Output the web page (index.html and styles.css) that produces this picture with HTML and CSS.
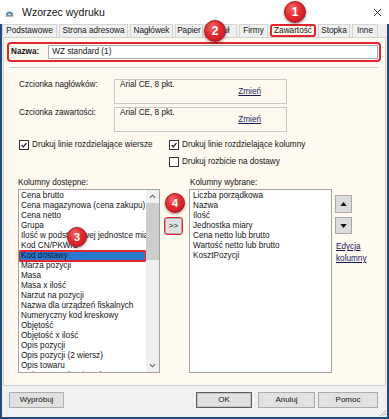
FILE: index.html
```html
<!DOCTYPE html>
<html lang="pl">
<head>
  <meta charset="UTF-8" />
  <title>Wzorzec wydruku</title>
  <link rel="stylesheet" href="styles.css">
</head>
<body>
  <div class="window">
    <div class="titlebar">
      <svg class="app-icon" viewBox="0 0 10 10">
        <path d="M1 8 A4 4 0 0 1 9 8 Z" fill="#5b86b4"/>
        <path d="M3 8 A2 2 0 0 1 7 8 Z" fill="#d9e6f2"/>
        <rect x="1" y="8" width="8" height="1.5" fill="#7a7a7a"/>
      </svg>
      <span class="title">Wzorzec wydruku</span>
      <svg class="close" viewBox="0 0 10 10">
        <path d="M1 1 L9 9 M9 1 L1 9" stroke="#222" stroke-width="1"/>
      </svg>
    </div>

    <div class="frame">
      <div class="tabs">
        <div class="tab">Podstawowe</div>
        <div class="tab">Strona adresowa</div>
        <div class="tab">Nagłówek</div>
        <div class="tab">Papier</div>
        <div class="tab">Tytuł</div>
        <div class="tab">Firmy</div>
        <div class="tab active">Zawartość</div>
        <div class="tab">Stopka</div>
        <div class="tab">Inne</div>
      </div>

      <div class="panel">
        <div class="name-row">
          <b>Nazwa:</b>
          <div class="input">WZ standard (1)</div>
        </div>
        <div class="sep"></div>

        <div class="fonts">
          <span class="label">Czcionka nagłówków:</span>
          <div class="font-box"><span>Arial CE, 8 pkt.</span><a>Zmień</a></div>
          <span class="label">Czcionka zawartości:</span>
          <div class="font-box"><span>Arial CE, 8 pkt.</span><a>Zmień</a></div>
        </div>

        <div class="checks">
          <div class="check"><span class="box on"><svg viewBox="0 0 10 10"><polyline points="2,5 4.2,7.3 8,2.6" fill="none" stroke="#1b1b1b" stroke-width="1.6"/></svg></span>Drukuj linie rozdzielające wiersze</div>
          <div class="check"><span class="box on"><svg viewBox="0 0 10 10"><polyline points="2,5 4.2,7.3 8,2.6" fill="none" stroke="#1b1b1b" stroke-width="1.6"/></svg></span>Drukuj linie rozdzielające kolumny</div>
          <div></div>
          <div class="check"><span class="box"></span>Drukuj rozbicie na dostawy</div>
        </div>

        <div class="columns">
          <div class="col-label">Kolumny dostępne:</div>
          <div></div>
          <div class="col-label right">Kolumny wybrane:</div>
          <div></div>

          <div class="listbox">
            <ul class="items">
              <li>Cena brutto</li>
              <li>Cena magazynowa (cena zakupu)</li>
              <li>Cena netto</li>
              <li>Grupa</li>
              <li>Ilość w podstawowej jednostce miary</li>
              <li>Kod CN/PKWiU</li>
              <li class="selected">Kod dostawy</li>
              <li>Marża pozycji</li>
              <li>Masa</li>
              <li>Masa x ilość</li>
              <li>Narzut na pozycji</li>
              <li>Nazwa dla urządzeń fiskalnych</li>
              <li>Numeryczny kod kreskowy</li>
              <li>Objętość</li>
              <li>Objętość x ilość</li>
              <li>Opis pozycji</li>
              <li>Opis pozycji (2 wiersz)</li>
              <li>Opis towaru</li>
              <li>Opis towaru (2 wiersz)</li>
            </ul>
            <div class="scrollbar">
              <div class="arrow"><svg viewBox="0 0 8 5"><polyline points="1,4 4,1 7,4" fill="none" stroke="#606060" stroke-width="1.2"/></svg></div>
              <div class="thumb"></div>
              <div class="track"></div>
              <div class="arrow"><svg viewBox="0 0 8 5"><polyline points="1,1 4,4 7,1" fill="none" stroke="#606060" stroke-width="1.2"/></svg></div>
            </div>
          </div>

          <div class="move"><button class="move-btn">&gt;&gt;</button></div>

          <div class="listbox">
            <ul class="items chosen">
              <li>Liczba porządkowa</li>
              <li>Nazwa</li>
              <li>Ilość</li>
              <li>Jednostka miary</li>
              <li>Cena netto lub brutto</li>
              <li>Wartość netto lub brutto</li>
              <li>KosztPozycji</li>
            </ul>
          </div>

          <div class="side">
            <button class="order up"><svg viewBox="0 0 8 5"><polygon points="0,5 4,0 8,5" fill="#111"/></svg></button>
            <button class="order down"><svg viewBox="0 0 8 5"><polygon points="0,0 8,0 4,5" fill="#111"/></svg></button>
            <a class="edit">Edycja<br>kolumny</a>
          </div>
        </div>
      </div>

      <div class="footer">
        <button class="btn try">Wypróbuj</button>
        <button class="btn ok">OK</button>
        <button class="btn cancel">Anuluj</button>
        <button class="btn help">Pomoc</button>
        <svg class="grip" viewBox="0 0 9 9">
          <path d="M8 2 L2 8 M8 5 L5 8 M8 8 L8 8" stroke="#b5b5b5" stroke-width="1"/>
        </svg>
      </div>
    </div>

    <div class="badge b1">1</div>
    <div class="badge b2">2</div>
    <div class="badge b3">3</div>
    <div class="badge b4">4</div>
  </div>
</body>
</html>
```

FILE: styles.css
```css
* {
  box-sizing: border-box;
}

body {
  margin: 0;
  font-family: "Liberation Sans", Arial, sans-serif;
  font-size: 8.2px;
  line-height: 10px;
  color: #141414;
  background-color: #ffffff;
}

.window {
  position: relative;
  width: 389px;
  height: 419px;
  display: flex;
  flex-direction: column;
}

.titlebar {
  height: 24px;
  display: flex;
  align-items: center;
  padding: 0 7px 0 5px;
  background-color: #ffffff;
}

.app-icon {
  width: 9px;
  height: 9px;
}

.title {
  margin-left: 8px;
  font-size: 10.5px;
  color: #111;
}

.close {
  width: 9px;
  height: 9px;
  margin-left: auto;
}

.frame {
  flex: 1;
  display: flex;
  flex-direction: column;
  border: 2px solid #1f4c7c;
  border-top: none;
  background-color: #f0f0f0;
}

.tabs {
  display: grid;
  grid-template-columns: 55px 69px 43px 28px 32px 29px 46px 32px 26px;
  column-gap: 2px;
  height: 13px;
}

.tab {
  border: 1px solid #d4d4d4;
  border-bottom: none;
  background-color: #f0f0f0;
  text-align: center;
  line-height: 11px;
  white-space: nowrap;
}

.tab.active {
  background-color: #fefaf0;
  border: 2px solid #e3262c;
  border-radius: 3px;
  line-height: 9px;
}

.panel {
  flex: 1;
  margin: 0 1px;
  border: 1px solid #d2d2d2;
  background-color: #fefaf0;
}

.name-row {
  display: flex;
  align-items: center;
  height: 20px;
  margin: 4px 4px 0 3px;
  padding: 0 1px 0 2px;
  border: 2px solid #e3262c;
  border-radius: 4px;
}

.name-row b {
  margin-right: 9px;
}

.input {
  flex: 1;
  height: 14px;
  padding-left: 3px;
  line-height: 12px;
  border: 1px solid #abadb3;
  background-color: #ffffff;
}

.sep {
  height: 1px;
  margin: 5px 7px 0 6px;
  background-color: #cfcfcf;
}

.fonts {
  display: grid;
  grid-template-columns: 95px 173px;
  row-gap: 3px;
  margin: 11px 0 0 15px;
}

.fonts .label {
  padding-top: 1px;
}

.font-box {
  display: flex;
  height: 25px;
  padding: 0 25px 0 5px;
  border: 1px solid #c8c8c8;
}

.font-box a,
.edit {
  margin-left: auto;
  margin-top: 7px;
  color: #17175e;
  text-decoration: underline;
}

.checks {
  display: grid;
  grid-template-columns: 150px auto;
  row-gap: 7px;
  margin: 8px 0 0 15px;
}

.check {
  display: flex;
  align-items: center;
  gap: 3px;
  height: 10px;
}

.box {
  display: flex;
  width: 10px;
  height: 10px;
  border: 1px solid #333;
  background-color: #ffffff;
}

.box svg {
  width: 8px;
  height: 8px;
}

.columns {
  display: grid;
  grid-template-columns: 142px 29px 143px 1fr;
  grid-template-rows: 11px 184px;
  margin: 11px 0 0 14px;
}

.col-label.right {
  padding-left: 1px;
}

.listbox {
  display: flex;
  border: 1px solid #a3a3a3;
  background-color: #ffffff;
  overflow: hidden;
}

.items {
  flex: 1;
  min-width: 0;
  margin: 0;
  padding: 1px 0 0;
  list-style: none;
}

.items li {
  padding-left: 2px;
  white-space: nowrap;
  overflow: hidden;
}

.items.chosen li {
  padding-left: 3px;
}

.items li.selected {
  background-color: #2a78cc;
  color: #0e1a3c;
  outline: 2px solid #e3262c;
  outline-offset: -1px;
  border-radius: 2px;
}

.scrollbar {
  display: flex;
  flex-direction: column;
  width: 13px;
  background-color: #f0f0f0;
}

.scrollbar .arrow {
  display: flex;
  align-items: center;
  justify-content: center;
  height: 13px;
}

.scrollbar .arrow svg {
  width: 7px;
  height: 5px;
}

.thumb {
  height: 57px;
  background-color: #cdcdcd;
}

.track {
  flex: 1;
}

.move-btn {
  width: 17px;
  height: 16px;
  margin: 29px 0 0 5px;
  padding: 0;
  font: inherit;
  font-size: 8px;
  border: 1px solid #adadad;
  background-color: #e1e1e1;
  outline: 1.5px solid #e3262c;
  outline-offset: 0;
  border-radius: 2px;
}

.side {
  display: flex;
  flex-direction: column;
  align-items: flex-start;
  padding-left: 3px;
}

.order {
  display: flex;
  align-items: center;
  justify-content: center;
  width: 17px;
  padding: 0;
  border: 1px solid #a8a8a8;
  background-color: #dcdcdc;
}

.order svg {
  width: 7px;
  height: 4px;
}

.order.up {
  height: 18px;
  margin-top: 6px;
}

.order.down {
  height: 17px;
  margin-top: 4px;
}

.edit {
  margin-left: 1px;
  line-height: 12px;
}

.footer {
  position: relative;
  display: flex;
  align-items: flex-start;
  height: 31px;
  padding: 6px 9px 0 7px;
  background-color: #f0f0f0;
}

.btn {
  height: 16px;
  padding: 0;
  font: inherit;
  font-size: 8px;
  color: #141414;
  border: 1px solid #adadad;
  background-color: #e1e1e1;
}

.btn.try {
  width: 55px;
  margin-right: auto;
}

.btn.ok {
  width: 56px;
  margin-right: 6px;
  border-color: #5c5c5c;
  box-shadow: inset 0 0 0 1px #c4c4c4;
}

.btn.cancel {
  width: 57px;
  margin-right: 3px;
}

.btn.help {
  width: 60px;
}

.grip {
  position: absolute;
  right: 0;
  bottom: 0;
  width: 9px;
  height: 9px;
}

.badge {
  position: absolute;
  display: flex;
  align-items: center;
  justify-content: center;
  border-radius: 50%;
  border: 1px solid #a5121a;
  background: radial-gradient(circle at 38% 32%, #f26a6a 0%, #df2a2f 45%, #c0161d 100%);
  box-shadow: 0 1px 3px rgba(0, 0, 0, 0.45);
  color: #ffffff;
  font-family: "Liberation Sans", Arial, sans-serif;
  font-size: 12px;
  font-weight: bold;
}

.b1 {
  left: 284px;
  top: 1px;
  width: 22px;
  height: 22px;
}

.b2 {
  left: 204px;
  top: 20px;
  width: 22px;
  height: 22px;
}

.b3 {
  left: 67px;
  top: 227px;
  width: 20px;
  height: 20px;
  font-size: 11px;
}

.b4 {
  left: 165px;
  top: 193px;
  width: 20px;
  height: 20px;
  font-size: 11px;
}
```
